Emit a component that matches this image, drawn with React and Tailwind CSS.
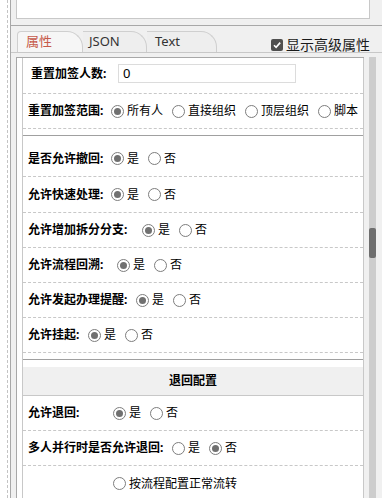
import React from 'react'

const font = { fontFamily: '"Noto Sans", "Noto Sans CJK SC", sans-serif' }

const Radio = ({ checked }) => (
  <span className="w-[13px] h-[13px] rounded-full border border-[#7d7d7d] bg-white flex items-center justify-center shrink-0">
    {checked && <span className="w-[7px] h-[7px] rounded-full bg-[#707070]" />}
  </span>
)

const Option = ({ label, checked }) => (
  <span className="flex items-center mr-[9px] shrink-0 whitespace-nowrap">
    <Radio checked={checked} />
    <span className="ml-[3px]">{label}</span>
  </span>
)

const Row = ({ label, labelW, options, className = '' }) => (
  <div className={`h-[35px] flex items-center pl-[5px] border-b border-dashed border-[#c8c8c8] whitespace-nowrap ${className}`}>
    <span className="font-bold shrink-0" style={{ width: labelW }}>{label}</span>
    {options.map((o, i) => (
      <Option key={i} label={o.label} checked={o.checked} />
    ))}
  </div>
)

const yesNo = (yes) => [
  { label: '是', checked: yes },
  { label: '否', checked: !yes },
]

const App = () => {
  const sectionB = [
    ['是否允许撤回:', 83],
    ['允许快速处理:', 83],
    ['允许增加拆分分支:', 114],
    ['允许流程回溯:', 89],
    ['允许发起办理提醒:', 108],
    ['允许挂起:', 60],
  ]

  return (
    <div className="w-[382px] h-[498px] flex bg-white overflow-hidden text-[12px] text-black" style={font}>
      {/* left strip */}
      <div className="w-[10px] shrink-0 bg-white">
        <div className="ml-[7px] h-full border-l border-dashed border-[#c4c4c4]" />
      </div>

      <div className="flex-1 flex flex-col border-l border-[#a8a8a8] bg-[#f0f0f0] min-w-0">
        {/* top text box */}
        <div className="ml-[5px] w-[354px] h-[19px] bg-white border-x border-b border-[#c8c8c8] shrink-0" />
        <div className="mt-[6px] h-px bg-[#a8a8a8] shrink-0" />

        {/* tabs */}
        <div className="h-[26px] flex items-end justify-between shrink-0">
          <div className="flex ml-[6px] h-[21px]">
            <div className="w-[66px] h-full pl-[8px] flex items-center bg-[#f6f6f6] border-t border-l border-r border-[#cfcfcf] rounded-tl-[4px] rounded-tr-[16px] text-[13px] text-[#c65a4a]">
              属性
            </div>
            <div className="w-[64px] h-full pl-[6px] flex items-center bg-[#eeeeee] border-t border-r border-[#cfcfcf] rounded-tr-[16px] text-[13px] text-[#333]">
              JSON
            </div>
            <div className="w-[70px] h-full pl-[8px] flex items-center bg-[#eeeeee] border-t border-r border-[#cfcfcf] rounded-tr-[16px] text-[13px] text-[#333]">
              Text
            </div>
          </div>
          <div className="flex items-center mr-[12px] self-start mt-[8px]">
            <span className="w-[12px] h-[12px] rounded-[2px] bg-[#4f4f4f] flex items-center justify-center">
              <svg width="10" height="10" viewBox="0 0 10 10">
                <path d="M2 5.2 L4.1 7.3 L8.2 2.6" fill="none" stroke="#fff" strokeWidth="1.6" />
              </svg>
            </span>
            <span className="ml-[3px] text-[14px] text-[#1a1a1a]">显示高级属性</span>
          </div>
        </div>
        <div className="h-px bg-[#c8c8c8] shrink-0" />

        {/* panel */}
        <div className="flex flex-1 mt-[4px] ml-[5px] min-h-0">
          <div className="w-[348px] border-l border-t border-[#a8a8a8] bg-white pl-[5px] shrink-0">
            <div className="w-[342px] h-full border-x border-[#c8c8c8]">
              {/* section A */}
              <div className="pb-[6px] border-b border-[#a0a0a0]">
                <div className="h-[36px] pb-[4px] flex items-center pl-[8px] border-b border-dashed border-[#c8c8c8]">
                  <span className="font-bold w-[87px] shrink-0">重置加签人数:</span>
                  <div className="w-[178px] h-[19px] border border-[#dcdcdc] flex items-center pl-[4px] text-[13px]">0</div>
                </div>
                <Row
                  label="重置加签范围:"
                  labelW={83}
                  options={[
                    { label: '所有人', checked: true },
                    { label: '直接组织' },
                    { label: '顶层组织' },
                    { label: '脚本' },
                  ]}
                />
              </div>

              {/* section B */}
              <div className="pt-[5px] pb-[6px] border-b border-[#a0a0a0]">
                {sectionB.map(([label, w], i) => (
                  <Row key={i} label={label} labelW={w} options={yesNo(true)} className={i < 2 ? 'h-[36px]' : ''} />
                ))}
              </div>

              {/* section C */}
              <div className="pt-[7px]">
                <div className="h-[29px] bg-[#f0f0f0] border-b border-[#c8c8c8] flex items-center justify-center font-bold">
                  退回配置
                </div>
                <Row label="允许退回:" labelW={85} options={yesNo(true)} />
                <Row label="多人并行时是否允许退回:" labelW={144} options={yesNo(false)} />
                <Row label="" labelW={85} options={[{ label: '按流程配置正常流转' }]} className="border-b-0" />
              </div>
            </div>
          </div>

          {/* scrollbar */}
          <div className="ml-[5px] w-[7px] bg-[#cdcdcd] flex flex-col shrink-0">
            <div className="mt-[171px] h-[30px] w-full rounded-[2px] bg-[#6e6e6e]" />
          </div>
        </div>
      </div>
    </div>
  )
}

export default App
